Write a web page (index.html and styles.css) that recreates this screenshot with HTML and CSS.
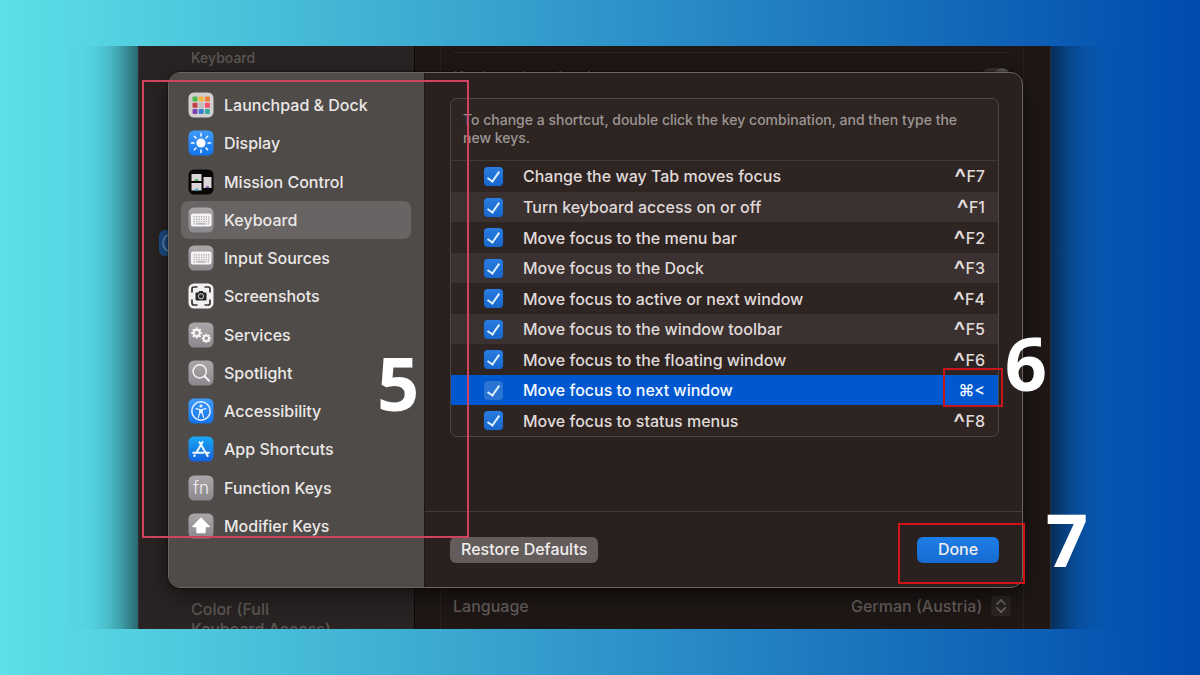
FILE: index.html
```html
<!DOCTYPE html>
<html lang="en">
<head>
<meta charset="utf-8">
<meta name="viewport" content="width=device-width, initial-scale=1">
<title>Keyboard Shortcuts</title>
<link rel="stylesheet" href="styles.css">
</head>
<body>
<svg class="defs" aria-hidden="true">
  <defs>
    <linearGradient id="gray" x1="0" y1="0" x2="0" y2="1"><stop offset="0" stop-color="#aaa6a9"/><stop offset="1" stop-color="#8b888d"/></linearGradient>
    <linearGradient id="blue" x1="0" y1="0" x2="0" y2="1"><stop offset="0" stop-color="#3f9bf8"/><stop offset="1" stop-color="#1273ea"/></linearGradient>
    <linearGradient id="store" x1="0" y1="0" x2="0" y2="1"><stop offset="0" stop-color="#19a8f5"/><stop offset="1" stop-color="#1461dc"/></linearGradient>
    <symbol id="kbd" viewBox="0 0 26 26">
      <rect x=".5" y=".5" width="25" height="25" rx="5.5" fill="url(#gray)"/>
      <rect x="3" y="6.500" width="20.500" height="13" rx="2" fill="#f6f4f5"/>
      <g stroke="#a5a1a5" stroke-width="1.200" fill="none"><path d="M5.500 9.800H21.500M5.500 12.300H21.500M5.500 14.600H21.500" stroke-dasharray="1.300 1.150"/><path d="M5.500 16.900h1.500M8.300 16.900h9.500M19.500 16.900h1.500"/></g>
    </symbol>
    <g id="gear">
      <circle r="3.100" fill="none" stroke="#f6f4f5" stroke-width="2.200"/>
      <path stroke="#f6f4f5" stroke-width="2" d="M0-3.500V-5.500M0 3.500V5.500M-3.500 0H-5.500M3.500 0H5.500M2.500-2.500L3.900-3.900M-2.500-2.500L-3.900-3.900M2.500 2.500L3.900 3.900M-2.500 2.500L-3.900 3.900"/>
    </g>
  </defs>
</svg>

<main class="stage">
  <div class="window">
    <aside class="back-side">
      <p class="back-result">Full Accessibility<br>Keyboard</p>
      <svg class="back-icon" viewBox="0 0 26 26" aria-hidden="true"><rect width="26" height="26" rx="6" fill="#1c4d86"/><circle cx="13" cy="13" r="9" fill="none" stroke="#6a8fb8" stroke-width="1.500"/></svg>
      <p class="back-result back-last">Color (Full<br>Keyboard Access)</p>
    </aside>
    <section class="back-main">
      <div class="back-group">
        <label class="back-row back-nav"><span>Keyboard navigation</span><input class="switch" type="checkbox" role="switch" checked></label>
        <div class="back-row back-lang">
          <label for="lang">Language</label>
          <span class="picker">
            <select id="lang"><option>German (Austria)</option></select>
            <svg viewBox="0 0 20 20" aria-hidden="true"><rect width="20" height="20" rx="4" fill="#2b2423"/><path d="M6 8L10 3.800L14 8M6 12L10 16.200L14 12" fill="none" stroke="#6b6462" stroke-width="1.800" stroke-linecap="round" stroke-linejoin="round"/></svg>
          </span>
        </div>
      </div>
    </section>

    <div class="sheet" role="dialog" aria-label="Keyboard Shortcuts">
      <nav class="side">
        <button class="item" type="button"><svg viewBox="0 0 26 26" aria-hidden="true"><rect x=".5" y=".5" width="25" height="25" rx="5.500" fill="#d3cfce"/><g><rect x="4.500" y="4.500" width="5" height="5" rx="1" fill="#4dbb4b"/><rect x="10.700" y="4.500" width="5" height="5" rx="1" fill="#f3b63d"/><rect x="16.900" y="4.500" width="5" height="5" rx="1" fill="#ee8139"/><rect x="4.500" y="10.700" width="5" height="5" rx="1" fill="#c43e48"/><rect x="10.700" y="10.700" width="5" height="5" rx="1" fill="#c3bebb"/><rect x="16.900" y="10.700" width="5" height="5" rx="1" fill="#ef5269"/><rect x="4.500" y="16.900" width="5" height="5" rx="1" fill="#7d43b5"/><rect x="10.700" y="16.900" width="5" height="5" rx="1" fill="#367fd0"/><rect x="16.900" y="16.900" width="5" height="5" rx="1" fill="#36a9a0"/></g></svg><span>Launchpad &amp; Dock</span></button>
        <button class="item" type="button"><svg viewBox="0 0 26 26" aria-hidden="true"><rect x=".5" y=".5" width="25" height="25" rx="5.500" fill="url(#blue)"/><circle cx="13" cy="13" r="4.600" fill="#fff"/><path d="M13 3.500v2.500M13 20v2.500M3.500 13h2.500M20 13h2.500M6.300 6.300L8 8M18 18l1.700 1.700M19.700 6.300L18 8M8 18l-1.700 1.700" stroke="#fff" stroke-width="1.500" stroke-linecap="round"/></svg><span>Display</span></button>
        <button class="item" type="button"><svg viewBox="0 0 26 26" aria-hidden="true"><rect x=".5" y=".5" width="25" height="25" rx="5.500" fill="#080808"/><path fill="#dcd6da" d="M3.500 5h10v7h-10zM15.500 8h8v11h-8zM3.500 14h10v7.500h-10z"/><path d="M6.500 12a2 2 0 0 1 4 0z" fill="#40b35a"/><path d="M6.500 21.500a2 2 0 0 1 4 0z" fill="#35a5d8"/><path d="M17.500 19a2 2 0 0 1 4 0z" fill="#9156b8"/></svg><span>Mission Control</span></button>
        <button class="item selected" type="button" aria-current="true"><svg aria-hidden="true"><use href="#kbd"/></svg><span>Keyboard</span></button>
        <button class="item" type="button"><svg aria-hidden="true"><use href="#kbd"/></svg><span>Input Sources</span></button>
        <button class="item" type="button"><svg viewBox="0 0 26 26" aria-hidden="true"><rect x=".5" y=".5" width="25" height="25" rx="5.500" fill="#f2f0f0"/><path d="M4 9.500V6q0-2 2-2h3.500M16.500 4H20q2 0 2 2v3.500M22 16.500V20q0 2-2 2h-3.500M9.500 22H6q-2 0-2-2v-3.500" fill="none" stroke="#343132" stroke-width="1.700"/><path d="M8.500 9.500h1.800l1-1.600h3.400l1 1.600h1.800q1 0 1 1v6q0 1-1 1h-9q-1 0-1-1v-6q0-1 1-1z" fill="#282526"/><circle cx="13" cy="13.300" r="2.600" fill="none" stroke="#d8d5d5" stroke-width="1"/></svg><span>Screenshots</span></button>
        <button class="item" type="button"><svg viewBox="0 0 26 26" aria-hidden="true"><rect x=".5" y=".5" width="25" height="25" rx="5.500" fill="url(#gray)"/><use href="#gear" x="8.700" y="11"/><use href="#gear" transform="translate(18.300 16.300) scale(.86)"/></svg><span>Services</span></button>
        <button class="item" type="button"><svg viewBox="0 0 26 26" aria-hidden="true"><rect x=".5" y=".5" width="25" height="25" rx="5.500" fill="url(#gray)"/><circle cx="11.700" cy="11.400" r="6.600" fill="none" stroke="#f6f4f5" stroke-width="1.500"/><path d="M16.500 16.300L21 20.800" stroke="#f6f4f5" stroke-width="2" stroke-linecap="round"/></svg><span>Spotlight</span></button>
        <button class="item" type="button"><svg viewBox="0 0 26 26" aria-hidden="true"><rect x=".5" y=".5" width="25" height="25" rx="5.500" fill="url(#blue)"/><circle cx="13" cy="13" r="9.200" fill="none" stroke="#e8f2ff" stroke-width="1.500"/><circle cx="13" cy="8" r="1.600" fill="#e8f2ff"/><path d="M8 10.700l3.800.9v3L10.300 19.500M18 10.700l-3.800.9v3L15.700 19.500" fill="none" stroke="#e8f2ff" stroke-width="1.200" stroke-linecap="round" stroke-linejoin="round"/><path d="M11.600 11.200h2.800v4h-2.800z" fill="#e8f2ff"/></svg><span>Accessibility</span></button>
        <button class="item" type="button"><svg viewBox="0 0 26 26" aria-hidden="true"><rect x=".5" y=".5" width="25" height="25" rx="5.500" fill="url(#store)"/><path d="M14.600 6L8.300 16.700M11.500 6.200L19.700 20M5.200 16.700h10.200M18 16.700h3M6.700 19.300L6.300 20" fill="none" stroke="#f2f8ff" stroke-width="2" stroke-linecap="round"/></svg><span>App Shortcuts</span></button>
        <button class="item" type="button"><svg viewBox="0 0 26 26" aria-hidden="true"><rect x=".5" y=".5" width="25" height="25" rx="5.500" fill="url(#gray)"/><text class="fn" x="13" y="19" text-anchor="middle">fn</text></svg><span>Function Keys</span></button>
        <button class="item" type="button"><svg viewBox="0 0 26 26" aria-hidden="true"><rect x=".5" y=".5" width="25" height="25" rx="5.500" fill="url(#gray)"/><path d="M13 5.300L21 13.500H17V19.500H9V13.500H5z" fill="#fff" stroke="#fff" stroke-width="1.400" stroke-linejoin="round"/></svg><span>Modifier Keys</span></button>
      </nav>
      <section class="main">
        <div class="panel">
          <p class="hint">To change a shortcut, double click the key combination, and then type the new keys.</p>
          <table class="keys">
            <tbody>
              <tr><td class="tick"><input type="checkbox" id="k1" checked></td><td><label for="k1">Change the way Tab moves focus</label></td><td class="combo"><span class="ctrl">^</span>F7</td></tr>
              <tr><td class="tick"><input type="checkbox" id="k2" checked></td><td><label for="k2">Turn keyboard access on or off</label></td><td class="combo"><span class="ctrl">^</span>F1</td></tr>
              <tr><td class="tick"><input type="checkbox" id="k3" checked></td><td><label for="k3">Move focus to the menu bar</label></td><td class="combo"><span class="ctrl">^</span>F2</td></tr>
              <tr><td class="tick"><input type="checkbox" id="k4" checked></td><td><label for="k4">Move focus to the Dock</label></td><td class="combo"><span class="ctrl">^</span>F3</td></tr>
              <tr><td class="tick"><input type="checkbox" id="k5" checked></td><td><label for="k5">Move focus to active or next window</label></td><td class="combo"><span class="ctrl">^</span>F4</td></tr>
              <tr><td class="tick"><input type="checkbox" id="k6" checked></td><td><label for="k6">Move focus to the window toolbar</label></td><td class="combo"><span class="ctrl">^</span>F5</td></tr>
              <tr><td class="tick"><input type="checkbox" id="k7" checked></td><td><label for="k7">Move focus to the floating window</label></td><td class="combo"><span class="ctrl">^</span>F6</td></tr>
              <tr class="active"><td class="tick"><input type="checkbox" id="k8" checked></td><td><label for="k8">Move focus to next window</label></td><td class="combo">⌘&lt;</td></tr>
              <tr><td class="tick"><input type="checkbox" id="k9" checked></td><td><label for="k9">Move focus to status menus</label></td><td class="combo"><span class="ctrl">^</span>F8</td></tr>
            </tbody>
          </table>
        </div>
        <footer class="actions">
          <button class="btn" type="button">Restore Defaults</button>
          <button class="btn primary" type="button">Done</button>
        </footer>
      </section>
    </div>

    <div class="mark mark-side"></div>
    <div class="mark mark-combo"></div>
    <div class="mark mark-done"></div>
    <span class="step step-5">5</span>
    <span class="step step-6">6</span>
    <span class="step step-7">7</span>
  </div>
</main>
</body>
</html>
```

FILE: styles.css
```css
*, *::before, *::after { box-sizing: border-box; }

body {
  margin: 0;
  min-height: 100vh;
  padding: 46px 0;
  display: flex;
  flex-direction: column;
  background: linear-gradient(90deg, #5de0e6, #004aad);
  font-family: Inter, "Liberation Sans", sans-serif;
  font-size: 16px;
  font-weight: 500;
  color: #e0dbda;
}

p { margin: 0; }
button, input, select { font: inherit; color: inherit; margin: 0; }
.defs { position: absolute; width: 0; height: 0; }

.stage {
  flex: 1;
  display: flex;
  padding: 0 149px 0 138px;
  overflow: hidden;
}

.window {
  position: relative;
  isolation: isolate;
  flex: 1;
  display: flex;
  min-height: 583px;
  border: solid #5b6466;
  border-width: 0 1px;
}

/* Taller than the window, so its shadow runs evenly to the clipped edges */
.window::before {
  content: "";
  position: absolute;
  inset: -60px 0;
  z-index: -1;
  background: #1e1716;
  box-shadow: 0 0 44px 4px rgba(0, 0, 0, .9);
}

/* Dimmed settings window behind the sheet */
.back-side {
  width: 276px;
  display: flex;
  flex-direction: column;
  justify-content: space-between;
  background: #292423;
  border-right: 1px solid #0d0a0a;
  color: #5d5856;
  font-size: 14px;
  line-height: 20px;
}
.back-result { padding-left: 52px; margin-top: -18px; }
.back-last { margin: 0 0 -10px; font-size: 16px; }
.back-icon { width: 26px; height: 26px; margin: 0 0 182px 20px; }

.back-main { flex: 1; display: flex; padding: 0 26px 0 25px; }
.back-group {
  flex: 1;
  display: flex;
  flex-direction: column;
  justify-content: space-between;
  padding: 6px 12px 9px;
  border: solid #2a2221;
  border-width: 0 1px;
  color: #645d5b;
}
.back-row { display: flex; align-items: center; justify-content: space-between; }
.back-nav { border-top: 1px solid #2b2322; padding-top: 14px; }
.back-lang { min-height: 28px; }
.switch {
  appearance: none;
  width: 30px;
  height: 18px;
  border-radius: 9px;
  background: radial-gradient(circle at 21px 9px, #5d5856 8px, #37302f 9px);
}
.picker { display: flex; align-items: center; gap: 8px; }
.picker select { appearance: none; border: 0; padding: 0; background: none; }
.picker svg { width: 20px; height: 20px; }

/* Shortcut sheet */
.sheet {
  position: absolute;
  inset: 26px 27px 41px 29px;
  display: flex;
  overflow: hidden;
  background: #2a201f;
  border: 1px solid #6a6462;
  border-radius: 12px;
  box-shadow: 0 0 2px #000, 0 8px 24px rgba(0, 0, 0, .5);
}

.side {
  width: 256px;
  display: grid;
  grid-auto-rows: 1fr;
  padding: 13px 13px 42px 12px;
  background: #4f4b49;
  border-right: 1px solid #1c1615;
}
.item {
  display: flex;
  align-items: center;
  gap: 10px;
  padding: 0 7px;
  border: 0;
  border-radius: 7px;
  background: none;
  color: #ebe8e7;
  text-align: left;
}
.item svg { width: 26px; height: 26px; flex: none; }
.item.selected { background: #686463; }
.fn { font: 300 17px Inter, sans-serif; fill: #f0eeef; }

.main { flex: 1; display: flex; flex-direction: column; justify-content: space-between; }
.panel {
  margin: 25px 23px 0 25px;
  overflow: hidden;
  background: #2e2523;
  border: 1px solid #4e4644;
  border-radius: 7px;
}
.hint {
  padding: 12px 32px 13px 12px;
  color: #9c9694;
  font-size: 14px;
  line-height: 18px;
}
.keys {
  width: 100%;
  height: 276px;
  border-collapse: collapse;
  border-top: 1px solid #413836;
}
.keys td { padding: 0; }
.keys tr:nth-child(even) { background: #3a3130; }
.keys tr.active { background: #0058d0; color: #f4f8ff; }
.keys .tick { width: 72px; padding-left: 33px; }
.keys .combo { padding-right: 13px; text-align: right; }
.ctrl { font-size: 26px; line-height: 16px; vertical-align: -5px; }

.tick input {
  appearance: none;
  display: block;
  width: 19px;
  height: 19px;
  border-radius: 4px;
  background: linear-gradient(#2a7ce0, #1767cd);
  box-shadow: 0 0 1px #0a4a9c;
}
.tick input:checked::before {
  content: "";
  display: block;
  width: 7px;
  height: 13px;
  margin: 0 auto;
  border: solid #dff0ff;
  border-width: 0 2px 2px 0;
  transform: translateY(2px) rotate(35deg);
}
.active .tick input { background: #2a75d3; }

.actions {
  display: flex;
  justify-content: space-between;
  padding: 25px 23px 24px 25px;
  border-top: 1px solid #433a38;
}
.btn {
  height: 26px;
  padding: 0 11px 2px;
  border: 0;
  border-radius: 6px;
  background: #645c5b;
  color: #f0eded;
}
.btn.primary { min-width: 82px; background: linear-gradient(#1e7de6, #166bd0); }

/* Tutorial marks */
.mark { position: absolute; border: 2px solid #d0435f; }
.mark-side { left: 3px; top: 34px; width: 327px; height: 458px; }
.mark-combo { right: 47px; top: 322px; width: 60px; height: 39px; border-color: #c8161c; }
.mark-done { right: 25px; top: 477px; width: 127px; height: 61px; border-color: #d01316; }
.step {
  position: absolute;
  color: #fff;
  font: 700 74px/74px "Open Sans", sans-serif;
}
.step-5 { left: 238px; top: 300px; }
.step-6 { right: 3px; top: 280px; }
.step-7 { right: -38px; top: 456px; }
```
